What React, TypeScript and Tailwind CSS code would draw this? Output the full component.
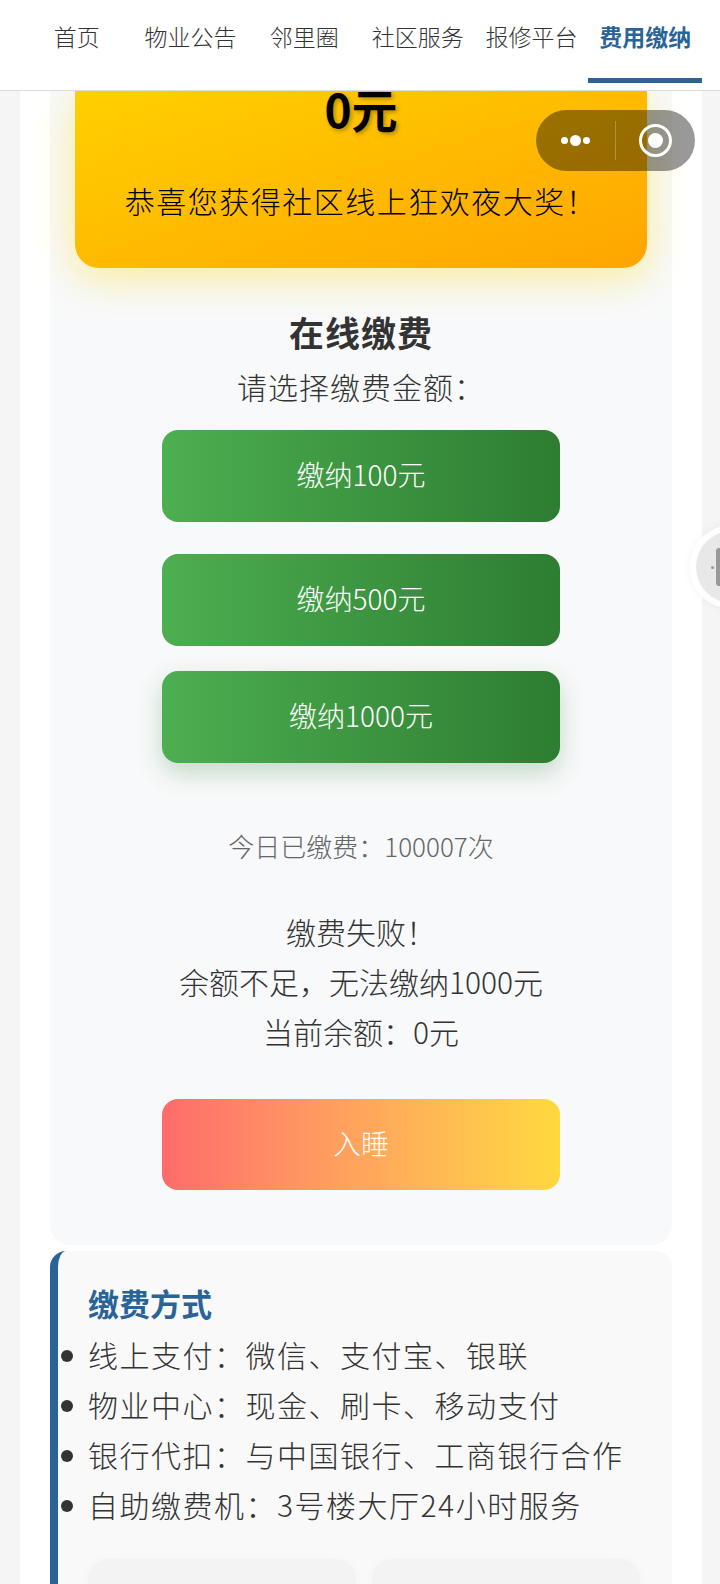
import React from 'react'

// full-width punctuation, the reference leaves the wide gap after these
const COLON = '\uFF1A'
const BANG = '\uFF01'
const COMMA = '\uFF0C'

const tabs = ['首页', '物业公告', '邻里圈', '社区服务', '报修平台', '费用缴纳']
const amounts = [
  { label: '缴纳100元', gap: 'mt-[22px]', glow: '' },
  { label: '缴纳500元', gap: 'mt-[32px]', glow: '' },
  { label: '缴纳1000元', gap: 'mt-[25px]', glow: 'shadow-[0_10px_25px_rgba(46,125,50,0.25)]' },
]
const methods = [
  `线上支付${COLON}微信、支付宝、银联`,
  `物业中心${COLON}现金、刷卡、移动支付`,
  `银行代扣${COLON}与中国银行、工商银行合作`,
  `自助缴费机${COLON}3号楼大厅24小时服务`,
]

export default function App() {
  return (
    <div className="relative h-[1584px] w-[720px] overflow-hidden bg-[#f5f5f5] font-['Noto_Sans_CJK_SC',sans-serif] font-light text-[#333]">
      <nav className="relative z-10 grid h-[91px] grid-cols-6 items-start border-b border-[#dddddd] bg-white pl-[20px] pr-[18px]">
        {tabs.map((tab, i) => (
          <div
            key={tab}
            className={
              i === 5
                ? 'h-[83px] border-b-[5px] border-[#2a6496] pt-[19px] text-center text-[23px] leading-[34px] font-bold text-[#2a6496]'
                : 'h-[83px] pt-[19px] text-center text-[23px] leading-[34px] text-[#333]'
            }
          >
            {tab}
          </div>
        ))}
      </nav>

      <main className="ml-[20px] mr-[18px] h-[1493px] bg-white px-[30px]">
        <section className="rounded-b-[20px] bg-[#f8f9fa] pb-[55px]">
          <div className="mx-[25px] flex h-[177px] flex-col items-center rounded-b-[24px] bg-linear-to-br from-[#ffd000] to-[#ffa500] shadow-[0_10px_40px_rgba(255,215,0,0.4)]">
            <div className="-mt-[6px] h-[48px] text-[46px] leading-[46px] font-bold text-black [text-shadow:2px_2px_4px_rgba(0,0,0,0.3)]">0元</div>
            <p className="mt-[45px] text-[30px] leading-[44px] tracking-[1.5px] text-black">恭喜您获得社区线上狂欢夜大奖{BANG}</p>
          </div>

          <h2 className="mt-[42px] text-center text-[35px] leading-[44px] font-bold tracking-[1px] text-[#333]">在线缴费</h2>
          <p className="mt-[10px] text-center text-[30px] leading-[44px] tracking-[1px] text-[#333]">请选择缴费金额{COLON}</p>

          {amounts.map((a) => (
            <button
              key={a.label}
              className={`mx-auto block h-[92px] w-[398px] rounded-[16px] bg-linear-to-r from-[#4caf50] to-[#2e7d32] pb-[4px] text-[28px] text-white ${a.gap} ${a.glow}`}
            >
              {a.label}
            </button>
          ))}

          <p className="mt-[63px] text-center text-[26px] leading-[40px] text-[#666]">今日已缴费{COLON}100007次</p>

          <div className="mt-[40px] text-center text-[30px] leading-[50px] text-[#333]">
            <p>缴费失败{BANG}</p>
            <p>余额不足{COMMA}无法缴纳1000元</p>
            <p>当前余额{COLON}0元</p>
          </div>

          <button className="mx-auto mt-[43px] block h-[91px] w-[398px] rounded-[16px] bg-linear-to-r from-[#ff6b6b] to-[#ffd93d] pb-[4px] text-[28px] text-white">
            入睡
          </button>
        </section>

        <section className="mt-[6px] rounded-[16px] border-l-[8px] border-[#2a6496] bg-[#f9f9f9] pt-[30px] pl-[30px] pr-[32px]">
          <h3 className="text-[31px] leading-[44px] font-bold text-[#2a6496]">缴费方式</h3>
          <ul className="mt-[4px] text-[30px] leading-[50px] tracking-[1.5px] text-[#333]">
            {methods.map((m) => (
              <li key={m} className="flex items-center">
                <span className="-ml-[27px] mr-[15px] mt-[4px] h-[12px] w-[12px] shrink-0 rounded-full bg-[#333]" />
                {m}
              </li>
            ))}
          </ul>
          <div className="mt-[30px] grid grid-cols-2 gap-[16px]">
            <div className="h-[100px] rounded-[20px] bg-[#f3f3f3] shadow-[0_0_12px_rgba(0,0,0,0.02)]" />
            <div className="h-[100px] rounded-[20px] bg-[#f3f3f3] shadow-[0_0_12px_rgba(0,0,0,0.02)]" />
          </div>
        </section>
      </main>

      {/* capsule menu sits over the page */}
      <div className="absolute top-[110px] left-[536px] z-20 flex h-[61px] w-[159px] items-center rounded-full bg-black/40">
        <div className="flex w-[79px] items-center justify-center gap-[2px]">
          <span className="h-[7px] w-[7px] rounded-full bg-white" />
          <span className="h-[11px] w-[11px] rounded-full bg-white" />
          <span className="h-[7px] w-[7px] rounded-full bg-white" />
        </div>
        <span className="h-[39px] w-px bg-white/25" />
        <div className="flex flex-1 items-center justify-center">
          <span className="flex h-[33px] w-[33px] items-center justify-center rounded-full border-[3px] border-white">
            <span className="h-[15px] w-[15px] rounded-full bg-white" />
          </span>
        </div>
      </div>

      {/* floating helper, mostly off screen */}
      <div className="absolute top-[525px] left-[690px] z-20 flex h-[84px] w-[84px] items-center rounded-full bg-white/80 p-[6px] shadow-[0_0_10px_rgba(0,0,0,0.05)]">
        <div className="flex h-full w-full items-center rounded-full bg-[#e8e8e8] pl-[15px]">
          <span className="h-[3px] w-[3px] rounded-full bg-[#999]" />
          <span className="ml-[2px] h-[38px] w-[12px] rounded-[3px] bg-[#999]" />
        </div>
      </div>
    </div>
  )
}
